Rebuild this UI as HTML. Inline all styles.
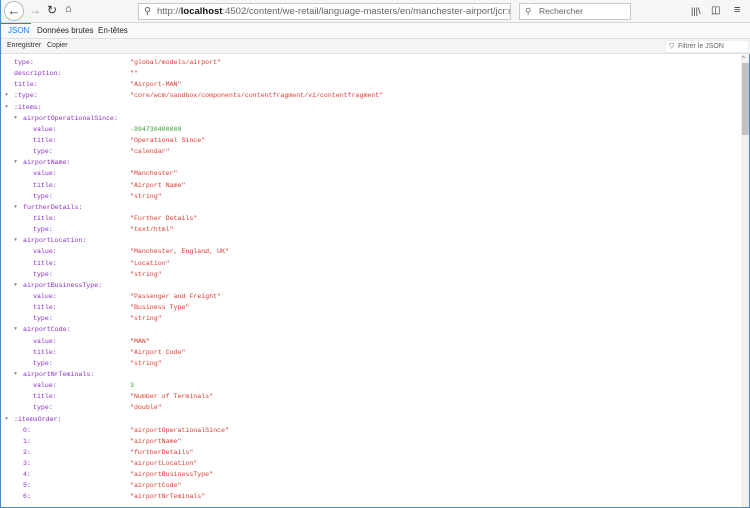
<!DOCTYPE html>
<html><head><meta charset="utf-8">
<style>
*{margin:0;padding:0;box-sizing:border-box}
body{width:750px;height:508px;overflow:hidden;background:#fff;font-family:"Liberation Sans",sans-serif;position:relative;border-left:1px solid #3c8fd8;border-right:1px solid #3c8fd8;border-bottom:1px solid #3c8fd8}
.tb{position:absolute;left:0;top:0;width:750px;height:23px;background:#f5f6f7;border-bottom:1px solid #d8d8d8}
.back{position:absolute;left:3px;top:1px;width:20px;height:20px;border:1px solid #b8b8b8;border-radius:50%;background:#fff;font-size:13px;line-height:17px;text-align:center;color:#333}
.ic{position:absolute;top:3px;font-size:12px;color:#333}
.url{position:absolute;left:137px;top:3px;width:373px;height:17px;border:1px solid #c8c8c8;background:#fff;font-size:9.5px;line-height:15px;padding-left:18px;color:#666;white-space:nowrap;overflow:hidden}
.url b{color:#111;font-weight:bold}
.srch{position:absolute;left:518px;top:3px;width:112px;height:17px;border:1px solid #c8c8c8;background:#fff;font-size:8.5px;line-height:15px;padding-left:19px;color:#666}
.tabs{position:absolute;left:0;top:23px;width:750px;height:16px;background:#f9f9fa;border-bottom:1px solid #e0e0e2;font-size:8px}
.tabs span{position:absolute;top:3px;color:#222}
.btns{position:absolute;left:0;top:39px;width:750px;height:15px;background:#f5f5f5;border-bottom:1px solid #e0e0e2;font-size:7px;color:#333}
.btns span{position:absolute;top:3px}
.filter{position:absolute;left:664px;top:40px;width:84px;height:13px;background:#fff;border:1px solid #eee;font-size:7px;color:#666;padding-left:12px;line-height:11px}
.sb{position:absolute;left:740px;top:55px;width:8px;height:452px;background:#f0f0f0}
.thumb{position:absolute;left:741px;top:63px;width:7px;height:72px;background:#c1c1c1}
.rows{position:absolute;left:0;top:57px;font-family:"Liberation Mono",monospace;font-size:6.6px}
.r{position:relative;height:11.15px;line-height:11.15px;white-space:pre}
.k{position:absolute;color:#8a2dc9}
.v{position:absolute;left:129px;color:#dd3b32}
.n{color:#3a9a3a}
.t{position:absolute;color:#888;font-size:5px}
</style></head><body>
<div class="tb">
<div class="back">&#8592;</div>
<div class="ic" style="left:28px;color:#999">&#8594;</div>
<div class="ic" style="left:46px">&#8635;</div>
<div class="ic" style="left:64px;font-size:11px">&#8962;</div>
<div class="url"><span style="position:absolute;left:5px;color:#555">&#9906;</span>http://<b>localhost</b>:4502/content/we-retail/language-masters/en/manchester-airport/jcr:content/root</div>
<div class="srch"><span style="position:absolute;left:5px">&#9906;</span>Rechercher</div>
<div class="ic" style="left:690px;font-size:9px;top:6px">|||\</div>
<div class="ic" style="left:710px;font-size:10px;top:5px">&#9707;</div>
<div class="ic" style="left:733px;font-size:11px;top:4px">&#8801;</div>
</div>
<div class="tabs">
<div style="position:absolute;left:0;top:0;width:30px;height:1px;background:#0a84ff"></div>
<span style="left:7px;color:#0a84ff">JSON</span>
<span style="left:36px">Données brutes</span>
<span style="left:97px">En-têtes</span>
</div>
<div class="btns"><span style="left:6px">Enregistrer</span><span style="left:46px">Copier</span></div>
<div class="filter"><span style="position:absolute;left:3px">&#9661;</span>Filtrer le JSON</div>
<div class="sb"></div><div class="thumb"></div>
<div style="position:absolute;left:741px;top:56px;font-size:6px;color:#555">^</div>
<div class="rows">
<div class="r"><span class="k" style="left:13px">type:</span><span class="v">"global/models/airport"</span></div>
<div class="r"><span class="k" style="left:13px">description:</span><span class="v">""</span></div>
<div class="r"><span class="k" style="left:13px">title:</span><span class="v">"Airport-MAN"</span></div>
<div class="r"><span class="t" style="left:4px">&#9660;</span><span class="k" style="left:13px">:type:</span><span class="v">"core/wcm/sandbox/components/contentfragment/v1/contentfragment"</span></div>
<div class="r"><span class="t" style="left:4px">&#9660;</span><span class="k" style="left:13px">:items:</span></div>
<div class="r"><span class="t" style="left:13px">&#9660;</span><span class="k" style="left:22px">airportOperationalSince:</span></div>
<div class="r"><span class="k" style="left:32px">value:</span><span class="v n">-994730400000</span></div>
<div class="r"><span class="k" style="left:32px">title:</span><span class="v">"Operational Since"</span></div>
<div class="r"><span class="k" style="left:32px">type:</span><span class="v">"calendar"</span></div>
<div class="r"><span class="t" style="left:13px">&#9660;</span><span class="k" style="left:22px">airportName:</span></div>
<div class="r"><span class="k" style="left:32px">value:</span><span class="v">"Manchester"</span></div>
<div class="r"><span class="k" style="left:32px">title:</span><span class="v">"Airport Name"</span></div>
<div class="r"><span class="k" style="left:32px">type:</span><span class="v">"string"</span></div>
<div class="r"><span class="t" style="left:13px">&#9660;</span><span class="k" style="left:22px">furtherDetails:</span></div>
<div class="r"><span class="k" style="left:32px">title:</span><span class="v">"Further Details"</span></div>
<div class="r"><span class="k" style="left:32px">type:</span><span class="v">"text/html"</span></div>
<div class="r"><span class="t" style="left:13px">&#9660;</span><span class="k" style="left:22px">airportLocation:</span></div>
<div class="r"><span class="k" style="left:32px">value:</span><span class="v">"Manchester, England, UK"</span></div>
<div class="r"><span class="k" style="left:32px">title:</span><span class="v">"Location"</span></div>
<div class="r"><span class="k" style="left:32px">type:</span><span class="v">"string"</span></div>
<div class="r"><span class="t" style="left:13px">&#9660;</span><span class="k" style="left:22px">airportBusinessType:</span></div>
<div class="r"><span class="k" style="left:32px">value:</span><span class="v">"Passenger and Freight"</span></div>
<div class="r"><span class="k" style="left:32px">title:</span><span class="v">"Business Type"</span></div>
<div class="r"><span class="k" style="left:32px">type:</span><span class="v">"string"</span></div>
<div class="r"><span class="t" style="left:13px">&#9660;</span><span class="k" style="left:22px">airportCode:</span></div>
<div class="r"><span class="k" style="left:32px">value:</span><span class="v">"MAN"</span></div>
<div class="r"><span class="k" style="left:32px">title:</span><span class="v">"Airport Code"</span></div>
<div class="r"><span class="k" style="left:32px">type:</span><span class="v">"string"</span></div>
<div class="r"><span class="t" style="left:13px">&#9660;</span><span class="k" style="left:22px">airportNrTeminals:</span></div>
<div class="r"><span class="k" style="left:32px">value:</span><span class="v n">3</span></div>
<div class="r"><span class="k" style="left:32px">title:</span><span class="v">"Number of Terminals"</span></div>
<div class="r"><span class="k" style="left:32px">type:</span><span class="v">"double"</span></div>
<div class="r"><span class="t" style="left:4px">&#9660;</span><span class="k" style="left:13px">:itemsOrder:</span></div>
<div class="r"><span class="k" style="left:22px">0:</span><span class="v">"airportOperationalSince"</span></div>
<div class="r"><span class="k" style="left:22px">1:</span><span class="v">"airportName"</span></div>
<div class="r"><span class="k" style="left:22px">2:</span><span class="v">"furtherDetails"</span></div>
<div class="r"><span class="k" style="left:22px">3:</span><span class="v">"airportLocation"</span></div>
<div class="r"><span class="k" style="left:22px">4:</span><span class="v">"airportBusinessType"</span></div>
<div class="r"><span class="k" style="left:22px">5:</span><span class="v">"airportCode"</span></div>
<div class="r"><span class="k" style="left:22px">6:</span><span class="v">"airportNrTeminals"</span></div>
</div>
</body></html>
